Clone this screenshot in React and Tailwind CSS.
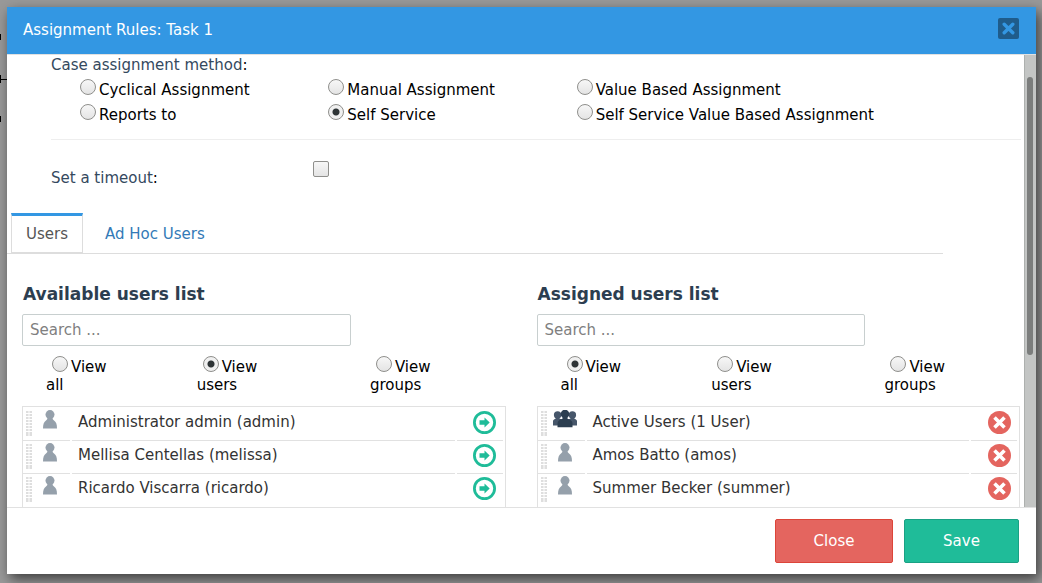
import { useState } from 'react';

const METHODS = [
  'Cyclical Assignment', 'Manual Assignment', 'Value Based Assignment',
  'Reports to', 'Self Service', 'Self Service Value Based Assignment',
];

const VIEWS = ['all', 'users', 'groups'];

const AVAILABLE = [
  { name: 'Administrator admin (admin)' },
  { name: 'Mellisa Centellas (melissa)' },
  { name: 'Ricardo Viscarra (ricardo)' },
];

const ASSIGNED = [
  { name: 'Active Users (1 User)', group: true },
  { name: 'Amos Batto (amos)' },
  { name: 'Summer Becker (summer)' },
];

const BOX = 'h-4 w-4 shrink-0 appearance-none border border-[#8f8f8c] bg-linear-to-b from-[#f7f7f7] to-[#e4e4e4]';
const RADIO = `${BOX} rounded-full checked:bg-[radial-gradient(circle,#2e3436_3px,#f0f0f0_4px)]`;

function DragHandle() {
  return (
    <svg width="6" height="26" viewBox="0 0 6 26" fill="#dedede" aria-hidden="true">
      {[1, 4, 7, 10, 13, 16, 19, 22, 24].map(y => (
        <g key={y}>
          <rect x="0" y={y} width="2.5" height="2" />
          <rect x="3.5" y={y} width="2.5" height="2" />
        </g>
      ))}
    </svg>
  );
}

function UserIcon() {
  return (
    <svg width="14" height="19" viewBox="0 0 14 19" fill="#95a0ab" aria-hidden="true">
      <circle cx="7" cy="4.6" r="4.5" />
      <path d="M4.500 7h5c0 2 .3 2.600 1.500 3.500 2 1.400 3 3.500 3 8H0c0-4.500 1-6.600 3-8C4.200 9.600 4.500 9 4.500 7z" />
    </svg>
  );
}

function GroupIcon() {
  return (
    <svg width="24" height="19" viewBox="0 0 24 19" aria-hidden="true">
      <g fill="#46566a">
        <circle cx="4.600" cy="5" r="3.700" />
        <circle cx="19.400" cy="5" r="3.700" />
        <path d="M0 15.500V11c0-1.200 1.800-1.700 2.800-2.500V7h3.600v1.500L9 9.500v6zM24 15.500V11c0-1.200-1.800-1.700-2.800-2.500V7h-3.600v1.500L15 9.500v6z" />
      </g>
      <g fill="#2c3e50">
        <circle cx="12" cy="4" r="4.300" />
        <path d="M9.500 6.500h5v2.300c2.800 1 5 2 5 4.700v3.800h-15v-3.800c0-2.700 2.200-3.700 5-4.700z" />
      </g>
    </svg>
  );
}

function AssignIcon() {
  return (
    <svg width="23" height="23" viewBox="0 0 23 23" aria-hidden="true">
      <circle cx="11.500" cy="11.500" r="10.100" fill="none" stroke="#1fbc99" strokeWidth="2.800" />
      <path d="M6.500 9.200h5V6.500l5.200 5-5.200 5v-2.700h-5z" fill="#1fbc99" />
    </svg>
  );
}

function RemoveIcon() {
  return (
    <svg width="23" height="23" viewBox="0 0 23 23" aria-hidden="true">
      <circle cx="11.500" cy="11.500" r="11.500" fill="#e4655f" />
      <path d="M6.500 6.500l10 10M16.500 6.500l-10 10" stroke="#fff" strokeWidth="3.600" />
    </svg>
  );
}

function UserList({ id, title, users, initialView, assigned }) {
  const [view, setView] = useState(initialView);
  const [query, setQuery] = useState('');
  const shown = users.filter(u => u.name.toLowerCase().includes(query.toLowerCase()));

  return (
    <section>
      <h2 className="pl-px text-[17px] leading-5 font-bold text-[#2c3e50]">{title}</h2>
      <input
        type="text"
        aria-label={`Search ${title}`}
        placeholder="Search ..."
        value={query}
        onChange={e => setQuery(e.target.value)}
        className="mt-[10px] block h-8 w-[68%] rounded-xs border border-[#c8cfcf] px-[7px] placeholder:text-[#808080]"
      />
      <div className="mt-[10px] grid grid-cols-[20fr_23fr_18fr] pl-6">
        {VIEWS.map(v => (
          <label key={v} className="w-[70px] leading-[18px] text-black">
            <input
              type="radio"
              name={`${id}-view`}
              checked={view === v}
              onChange={() => setView(v)}
              className={`${RADIO} mr-[3px] ml-[6px] align-baseline`}
            />
            View {v}
          </label>
        ))}
      </div>
      <ul className="mt-3 border border-[#e1e1e1] pt-px text-[#333]">
        {shown.map(u => (
          <li key={u.name} className="grid h-[33px] grid-cols-[47px_1fr_46px] gap-[2px] pr-[2px] *:border-b *:border-[#e1e1e1] last:*:border-b-0">
            <span className="flex items-start gap-[11px] pt-[2px] pl-[3px]">
              <DragHandle />
              <span className={u.group ? '-ml-[5px]' : ''}>{u.group ? <GroupIcon /> : <UserIcon />}</span>
            </span>
            <span className="pl-[6px] leading-[29px]">{u.name}</span>
            <span className="flex items-start justify-center pt-[3px] pl-[10px]">
              <button type="button" aria-label={assigned ? `Remove ${u.name}` : `Assign ${u.name}`}>
                {assigned ? <RemoveIcon /> : <AssignIcon />}
              </button>
            </span>
          </li>
        ))}
      </ul>
    </section>
  );
}

export default function App() {
  const [method, setMethod] = useState('Self Service');
  const [timeout, setTimeoutOn] = useState(false);

  return (
    <div className="relative h-screen overflow-hidden bg-[#999] pt-[7px] pr-[6px] pb-[9px] pl-[7px] font-['DejaVu_Sans',sans-serif] text-[15px]">
      {/* edges of the process map behind the dialog */}
      <span className="absolute top-[34px] left-0 h-[6px] w-px bg-black" />
      <span className="absolute top-[75px] left-0 h-2 w-px bg-black" />
      <span className="absolute top-[79px] left-0 h-px w-[7px] bg-black" />
      <span className="absolute top-[116px] left-0 h-[6px] w-px bg-black" />

      <div role="dialog" aria-labelledby="dialog-title" className="relative flex h-full flex-col bg-white shadow-[3px_5px_12px_rgba(0,0,0,0.6)]">
        <header className="flex h-[47px] shrink-0 items-center justify-between bg-[#3397e3] pr-[17px] pl-4">
          <h1 id="dialog-title" className="text-white">Assignment Rules: Task 1</h1>
          <button type="button" aria-label="Close dialog" className="mb-1 grid h-[21px] w-[21px] place-items-center rounded-xs bg-[#1f5c8b]">
            <svg width="13" height="13" viewBox="0 0 13 13" stroke="#3397e3" strokeWidth="3.400" strokeLinecap="round">
              <path d="M2.200 2.200l8.600 8.600M10.800 2.200l-8.600 8.600" />
            </svg>
          </button>
        </header>

        <div className="flex min-h-0 flex-1 border-y border-[#e1e1e1]">
          <div className="min-w-0 flex-1 overflow-hidden">
            <fieldset className="mr-[3px] ml-11 border-b border-[#eee] pb-[11px]">
              <legend className="leading-5 text-[#34495e]">Case assignment method<span className="text-black">:</span></legend>
              <div className="mt-[3px] grid grid-cols-[19fr_19fr_34fr] pl-[29px]">
                {METHODS.map(m => (
                  <label key={m} className="flex items-start gap-[3px] leading-[25px] text-black">
                    <input
                      type="radio"
                      name="method"
                      checked={method === m}
                      onChange={() => setMethod(m)}
                      className={`${RADIO} mt-px`}
                    />
                    {m}
                  </label>
                ))}
              </div>
            </fieldset>

            <div className="mt-[21px] ml-11 flex items-start">
              <label htmlFor="timeout" className="w-[262px] pt-[7px] leading-5 text-[#34495e]">Set a timeout<span className="text-black">:</span></label>
              <input
                id="timeout"
                type="checkbox"
                checked={timeout}
                onChange={e => setTimeoutOn(e.target.checked)}
                className={`${BOX} rounded-xs checked:bg-[#2e3436]`}
              />
            </div>

            <nav className="mt-[25px] flex w-[92%] items-start border-b border-[#ddd] pl-1">
              <a href="#users" className="h-10 border border-t-3 border-[#ddd] border-t-[#3397e3] px-[14px] leading-9 text-[#555]">Users</a>
              <a href="#adhoc" className="h-10 border-t-3 border-transparent px-[22px] leading-9 text-[#337ab7]">Ad Hoc Users</a>
            </nav>

            <div className="mt-[30px] grid grid-cols-2 gap-[31px] pr-1 pl-[15px]">
              <UserList id="available" title="Available users list" users={AVAILABLE} initialView="users" />
              <UserList id="assigned" title="Assigned users list" users={ASSIGNED} initialView="all" assigned />
            </div>
          </div>

          <div className="w-3 shrink-0 border-l border-[#adb0ae] bg-[#c3c5c4] pt-[22px] pl-[2px]">
            <div className="h-[278px] w-[6px] rounded-full bg-[#7b7d7c]" />
          </div>
        </div>

        <footer className="flex shrink-0 justify-end gap-[11px] pt-[11px] pr-[17px] pb-[11px] text-white">
          <button type="button" className="h-11 w-[118px] rounded-xs border border-[#dc4539] bg-[#e4655f]">Close</button>
          <button type="button" className="h-11 w-[115px] rounded-xs border border-[#1aa184] bg-[#1fbc99]">Save</button>
        </footer>
      </div>
    </div>
  );
}
